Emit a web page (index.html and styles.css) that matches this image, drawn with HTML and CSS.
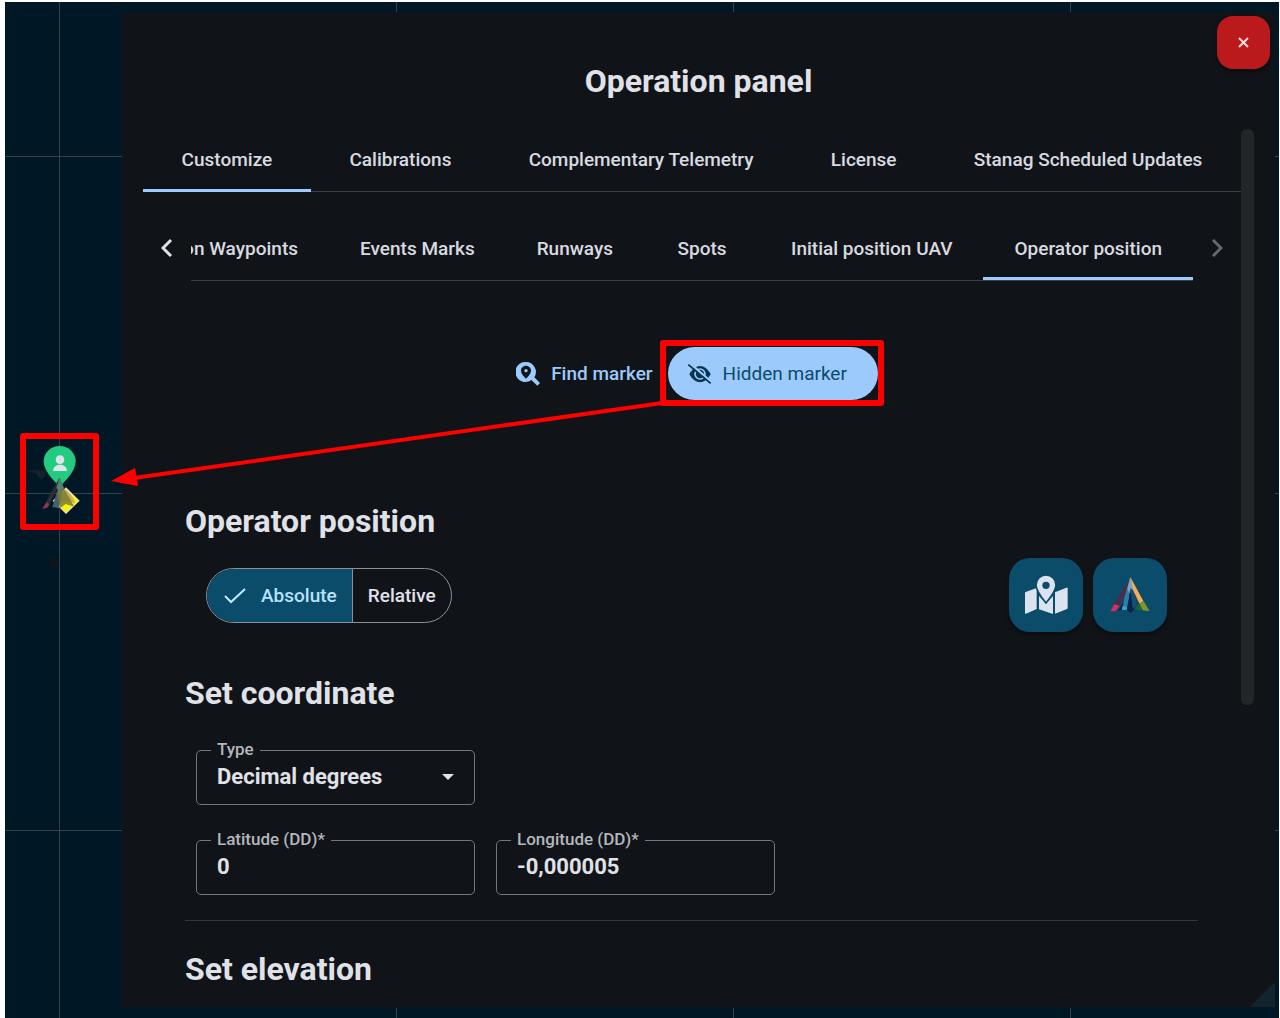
FILE: index.html
```html
<!DOCTYPE html>
<html lang="en">
<head>
    <meta charset="UTF-8">
    <meta name="viewport" content="width=device-width, initial-scale=1.0">
    <title>Operation panel</title>
    <link rel="stylesheet" href="styles.css">
</head>
<body>
<div class="map">
    <!-- Operator marker and vehicle on the map -->
    <svg class="map-marker" width="70" height="130" viewBox="0 0 210 390" aria-hidden="true">
        <path d="M46 93l24-4 24 4 6-12v30l-14 8-12-17z" fill="#13222b"/>
        <path d="M114 353h22v30h-22z" fill="#0f1519"/>
        <path d="M143 18c-27 0-48 20-48 46 0 24 22 52 48 76 26-24 48-52 48-76 0-26-21-46-48-46z" fill="#22cb80"/>
        <circle cx="144" cy="59" r="13" fill="#dfe3ee"/>
        <path d="M123 93c0-12 9-19 21-19s21 7 21 19z" fill="#dfe3ee"/>
        <path d="M162 138l44 45-43 43-43-43z" fill="#141b1a"/>
        <path d="M162 142l41 40-41 40-40-40z" fill="#e6dfc0"/>
        <path d="M162 149l32 33-32 32-30-32z" fill="#c9b050"/>
        <path d="M162 216l-24-23 24-13 26 10z" fill="#f7f500"/>
        <path d="M198 181l-6 9-16-26z" fill="#fff200"/>
        <path d="M143 112l-8 36-27 55-17 3z" fill="#2b2d35"/>
        <path d="M91 206l13-19 8 6-8 11z" fill="#8d3852"/>
        <path d="M143 112l10 32-12 61-20-4 15-50z" fill="#45616c"/>
        <path d="M143 112l14 36 30 52-26-8-16 12-8-40z" fill="#7b7b35" opacity=".85"/>
        <path d="M143 112l12 32-12 10-10-10z" fill="#4f8175"/>
    </svg>

    <main class="panel">
        <button class="close" type="button" aria-label="Close">
            <svg width="13" height="13" viewBox="0 0 13 13"><path d="M2 2l9 9M11 2l-9 9" stroke="#ffdad6" stroke-width="2" fill="none"/></svg>
        </button>
        <h1 class="title">Operation panel</h1>

        <div class="panel-body">
            <div class="content">
                <nav class="tabs tabs-main">
                    <button class="tab active" type="button">Customize</button>
                    <button class="tab" type="button">Calibrations</button>
                    <button class="tab" type="button">Complementary Telemetry</button>
                    <button class="tab" type="button">License</button>
                    <button class="tab" type="button">Stanag Scheduled Updates</button>
                </nav>

                <div class="sub-tabs">
                    <button class="pager" type="button" aria-label="Previous tabs">
                        <svg width="12" height="20" viewBox="0 0 12 20"><path d="M10 2l-8 8 8 8" stroke="#e0e2e8" stroke-width="3" fill="none"/></svg>
                    </button>
                    <nav class="tabs tabs-sub">
                        <button class="tab" type="button">Mission Waypoints</button>
                        <button class="tab" type="button">Events Marks</button>
                        <button class="tab" type="button">Runways</button>
                        <button class="tab" type="button">Spots</button>
                        <button class="tab" type="button">Initial position UAV</button>
                        <button class="tab active" type="button">Operator position</button>
                    </nav>
                    <button class="pager" type="button" aria-label="Next tabs" disabled>
                        <svg width="12" height="20" viewBox="0 0 12 20"><path d="M2 2l8 8-8 8" stroke="#65696d" stroke-width="3" fill="none"/></svg>
                    </button>
                </div>

                <div class="marker-actions">
                    <button class="btn-text" type="button">
                        <svg width="24" height="24" viewBox="0 0 72 72"><path fill="#9ccafc" fill-rule="evenodd" d="M30 0a30 30 0 0 1 25 46l17 17-8 8-18-17A30 30 0 1 1 30 0zM30 11c-9 0-15 7-15 15 0 8 7 16 15 24 8-8 15-16 15-24 0-8-6-15-15-15z"/><circle cx="30" cy="26" r="5" fill="#9ccafc"/></svg>
                        Find marker
                    </button>
                    <button class="btn-filled" type="button">
                        <svg width="24" height="20" viewBox="0 0 72 60"><path d="M4 31C13 14 24 6 36 6s23 8 32 25C59 47 48 55 36 55S13 47 4 31z" fill="#06354d"/><circle cx="36" cy="30" r="15" fill="none" stroke="#9ccafc" stroke-width="5"/><path d="M36 22l9 9-4 7-11-12z" fill="#9ccafc"/><path d="M6-2l68 59" stroke="#9ccafc" stroke-width="7"/><path d="M1 2l67 56" stroke="#06354d" stroke-width="5"/></svg>
                        Hidden marker
                    </button>
                </div>

                <section class="section">
                    <h2>Operator position</h2>
                    <div class="position-row">
                        <div class="toggle">
                            <button class="selected" type="button" aria-pressed="true">
                                <svg width="22" height="17" viewBox="0 0 22 17"><path d="M1 9l6 6L21 2" stroke="#c2e8ff" stroke-width="2" fill="none"/></svg>
                                Absolute
                            </button>
                            <button type="button" aria-pressed="false">Relative</button>
                        </div>
                        <div class="tools">
                            <button class="tool" type="button" aria-label="Pick on map">
                                <svg width="44" height="40" viewBox="102 103 132 120">
                                    <path fill="#dbe2f0" d="M105 157q0-2 2-3l33-12v63l-32 14q-3 1-3-2zM195 155l34-14q4-1 4 2v59q0 2-2 3l-36 14zM147 166l21 22 21-22v54l-42-14z"/>
                                    <path fill="#dbe2f0" stroke="#0a4c6a" stroke-width="5" d="M168 103c-17 0-30 13-30 30 0 16 16 37 30 54 14-17 30-38 30-54 0-17-13-30-30-30z"/>
                                    <circle cx="168" cy="134" r="11" fill="#0a4c6a"/>
                                </svg>
                            </button>
                            <button class="tool" type="button" aria-label="Use vehicle position">
                                <svg width="40" height="36" viewBox="360 106 120 108">
                                    <path fill="#4c2b4c" d="M421 106l-8 34-28 58-16-6z"/>
                                    <path fill="#dc2d5c" d="M361 209l12-21 16 4-12 16z"/>
                                    <path fill="#0a2348" d="M421 150l14 50-13 14-17-14-22 8z"/>
                                    <path fill="#2d7fa8" d="M420 108l-3 60-7 36-14 1 8-40z"/>
                                    <path fill="#35aacb" d="M398 194l13 2v8h-15z"/>
                                    <path fill="#78a8bc" d="M421 106l9 34-9 20-9-18z"/>
                                    <path fill="#164e73" d="M422 140l9 8 9 44-15 12z"/>
                                    <path fill="#f5ad57" d="M421 106l39 72-11 9-19-40z"/>
                                    <path fill="#1c6634" d="M433 202l16-17 12 24z"/>
                                    <path fill="#82952e" d="M449 187l12-8 18 30-20-3z"/>
                                    <path fill="#0a2348" d="M421 138l7 62-6 13-8-13z"/>
                                </svg>
                            </button>
                        </div>
                    </div>
                </section>

                <section class="section">
                    <h2>Set coordinate</h2>
                    <div class="fields">
                        <div class="field field-type">
                            <label for="type">Type</label>
                            <select id="type">
                                <option>Decimal degrees</option>
                            </select>
                            <svg class="caret" width="12" height="6" viewBox="0 0 12 6" aria-hidden="true"><path d="M0 0h12L6 6z" fill="#e0e2e8"/></svg>
                        </div>
                        <div class="field">
                            <label for="latitude">Latitude (DD)*</label>
                            <input type="text" id="latitude" value="0">
                        </div>
                        <div class="field">
                            <label for="longitude">Longitude (DD)*</label>
                            <input type="text" id="longitude" value="-0,000005">
                        </div>
                    </div>
                </section>

                <section class="section section-divided">
                    <h2>Set elevation</h2>
                </section>
            </div>
            <div class="scrollbar"></div>
        </div>
        <div class="resize"></div>
    </main>

    <!-- Callout from the button to the map marker -->
    <svg class="callout" width="900" height="560" viewBox="0 0 900 560" aria-hidden="true">
        <g fill="none" stroke="#ff0000" stroke-linejoin="round">
            <rect x="23" y="436" width="73" height="91" stroke-width="6"/>
            <rect x="663" y="343" width="218" height="60" stroke-width="6"/>
            <path d="M662 403L134 478" stroke-width="4"/>
        </g>
        <path d="M111 481l24-13 3 18z" fill="#ff0000"/>
    </svg>
</div>
</body>
</html>
```
FILE: styles.css
```css
* {
    box-sizing: border-box;
}

body {
    margin: 0;
    padding: 2px 1px 0 5px;
    background: #fff;
    color: #e0e2e8;
    font-family: Roboto, "Liberation Sans", sans-serif;
}

button, input, select {
    font-family: inherit;
    color: inherit;
    background: none;
    border: none;
    padding: 0;
    margin: 0;
}

button {
    cursor: pointer;
}

h1, h2 {
    margin: 0;
    font-size: 32px;
    font-weight: 700;
    line-height: 43px;
}

/* Map with its grid */
.map {
    display: flex;
    min-height: calc(100vh - 2px);
    padding: 10px 4px 10px 117px;
    background-color: #001825;
    background-image: linear-gradient(#364047 1px, transparent 1px), linear-gradient(90deg, #364047 1px, transparent 1px);
    background-size: 337px 337px;
    background-position: 54px 154px;
}

.map-marker {
    position: absolute;
    left: 12px;
    top: 440px;
}

.callout {
    position: absolute;
    left: 0;
    top: 0;
    pointer-events: none;
}

/* Panel */
.panel {
    position: relative;
    flex: 1;
    min-width: 0;
    padding: 48px 21px 16px;
    background: #101418;
    border-radius: 5px;
}

.title {
    text-align: center;
}

.close {
    position: absolute;
    right: 5px;
    top: 4px;
    width: 53px;
    height: 53px;
    display: flex;
    align-items: center;
    justify-content: center;
    background: #ba1a1c;
    border-radius: 16px;
    box-shadow: 0 3px 4px rgba(0, 0, 0, 0.4);
}

.panel-body {
    display: flex;
    margin-top: 26px;
}

.content {
    flex: 1;
    min-width: 0;
}

.scrollbar {
    width: 13px;
    height: 576px;
    background: #232629;
    border-radius: 6px;
}

.resize {
    position: absolute;
    right: 0;
    bottom: 1px;
    width: 25px;
    height: 25px;
    background: #12242e;
    clip-path: polygon(100% 0, 100% 100%, 0 100%);
}

/* Tabs */
.tabs {
    display: flex;
    height: 63px;
    border-bottom: 1px solid #3a3f44;
}

.tab {
    position: relative;
    flex: 1 0 auto;
    font-size: 19px;
    font-weight: 500;
    color: #d8dae0;
    white-space: nowrap;
}

.tab.active::after {
    content: "";
    position: absolute;
    left: 0;
    right: 0;
    bottom: -1px;
    height: 3px;
    background: #9ccafc;
}

.tabs-main .tab {
    padding: 0 36px 2px;
}

.sub-tabs {
    display: flex;
    margin-top: 26px;
}

.pager {
    flex: none;
    width: 48px;
    padding-bottom: 3px;
    display: flex;
    align-items: center;
    justify-content: center;
}

.tabs-sub {
    flex: 1;
    min-width: 0;
    justify-content: flex-end;
    overflow: hidden;
}

.tabs-sub .tab {
    flex: none;
    min-width: 116px;
    padding: 0 31px 2px;
}

.tabs-sub .tab.active::after {
    bottom: 0;
}

/* Marker buttons */
.marker-actions {
    display: flex;
    justify-content: center;
    gap: 15px;
    margin-top: 66px;
    padding-left: 10px;
}

.btn-text, .btn-filled {
    display: flex;
    align-items: center;
    gap: 11px;
    height: 53px;
    font-size: 19px;
    font-weight: 500;
}

.btn-text {
    color: #9ccafc;
}

.btn-filled {
    padding: 0 31px 0 20px;
    font-weight: 400;
    color: #0a4c6a;
    background: #9ccafc;
    border-radius: 27px;
}

/* Sections */
.section {
    margin: 40px 43px 0 42px;
}

.marker-actions + .section {
    margin-top: 100px;
}

.section-divided {
    margin-top: 25px;
    padding-top: 27px;
    border-top: 1px solid #34383c;
}

.position-row {
    display: flex;
    align-items: center;
    justify-content: space-between;
    margin-top: 15px;
    padding: 0 31px 0 21px;
}

.toggle {
    display: flex;
    height: 55px;
    border: 1px solid #8b9198;
    border-radius: 28px;
    overflow: hidden;
}

.toggle button {
    display: flex;
    align-items: center;
    gap: 15px;
    padding: 0 15px;
    font-size: 19px;
    font-weight: 500;
}

.toggle .selected {
    padding-left: 17px;
    color: #b8e2fb;
    background: #0a4c6a;
    border-right: 1px solid #8b9198;
}

.tools {
    display: flex;
    gap: 10px;
}

.tool {
    width: 74px;
    height: 74px;
    display: flex;
    align-items: center;
    justify-content: center;
    background: #0a4c6a;
    border-radius: 21px;
    box-shadow: 0 3px 4px rgba(0, 0, 0, 0.4);
}

/* Form fields */
.fields {
    display: grid;
    grid-template-columns: 279px 279px;
    gap: 35px 21px;
    margin-top: 35px;
    padding-left: 11px;
}

.field {
    position: relative;
}

.field-type {
    grid-column: 1 / 2;
}

.field-type + .field {
    grid-column-start: 1;
}

.field label {
    position: absolute;
    left: 15px;
    top: -11px;
    padding: 0 6px;
    font-size: 17px;
    font-weight: 500;
    line-height: 20px;
    color: #b4b7bc;
    background: #101418;
}

.field input, .field select {
    display: block;
    width: 100%;
    height: 55px;
    padding: 0 20px 2px;
    font-size: 22px;
    font-weight: 700;
    border: 1px solid #72777c;
    border-radius: 5px;
    appearance: none;
}

.caret {
    position: absolute;
    right: 21px;
    top: 24px;
    pointer-events: none;
}
```
